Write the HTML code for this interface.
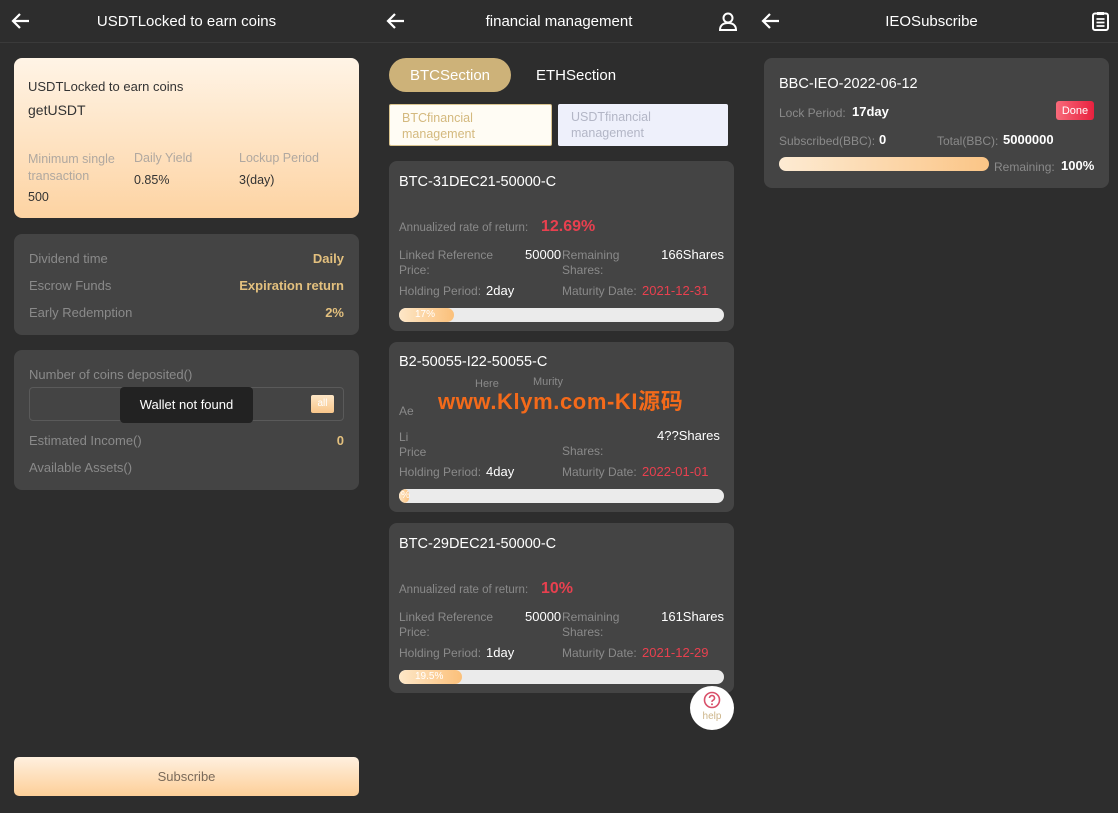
<!DOCTYPE html>
<html><head><meta charset="utf-8"><style>
*{margin:0;padding:0;box-sizing:border-box}
body{width:1118px;height:813px;background:#2d2d2d;font-family:"Liberation Sans","Noto Sans CJK SC",sans-serif;position:relative;overflow:hidden;color:#fff}
.a{position:absolute}
.hdr{position:absolute;top:0;height:43px;border-bottom:1px solid #3a3a3a;font-size:15px;color:#fff;text-align:center;line-height:44px}
.arrow{position:absolute;top:12px}
.card{position:absolute;background:#444;border-radius:8px}
.lab{color:#8a8a8a;font-size:12px}
.gold{color:#e3c07e;font-weight:bold;font-size:13px}
.red{color:#e8404f}
.bar{position:absolute;height:14px;background:#ebebeb;border-radius:7px;overflow:hidden}
.bar i{display:block;height:14px;background:linear-gradient(90deg,#fde7c8,#fbc07a);border-radius:7px;color:#fff;font-size:10px;font-style:normal;line-height:14px;padding-left:8px}
</style></head><body>
<div class="hdr" style="left:0;width:373px">USDTLocked to earn coins</div>
<div class="hdr" style="left:373px;width:372px">financial management</div>
<div class="hdr" style="left:745px;width:373px">IEOSubscribe</div>
<svg class="arrow" style="left:11px" width="20" height="18" viewBox="0 0 20 18"><path d="M18 9H3M9 2L2 9l7 7" stroke="#fff" stroke-width="2.2" fill="none"/></svg>
<svg class="arrow" style="left:386px" width="20" height="18" viewBox="0 0 20 18"><path d="M18 9H3M9 2L2 9l7 7" stroke="#fff" stroke-width="2.2" fill="none"/></svg>
<svg class="arrow" style="left:761px" width="20" height="18" viewBox="0 0 20 18"><path d="M18 9H3M9 2L2 9l7 7" stroke="#fff" stroke-width="2.2" fill="none"/></svg>
<svg class="a" style="left:718px;top:12px" width="20" height="19" viewBox="0 0 20 19"><circle cx="10" cy="6" r="4.5" stroke="#fff" stroke-width="2" fill="none"/><path d="M2 18c0-5 3.5-7 8-7s8 2 8 7z" stroke="#fff" stroke-width="2" fill="none"/></svg>
<svg class="a" style="left:1092px;top:11px" width="17" height="20" viewBox="0 0 17 20"><rect x="1" y="2.5" width="15" height="16.5" rx="2" stroke="#fff" stroke-width="2" fill="none"/><rect x="5" y="1" width="7" height="3" fill="#fff"/><path d="M4.5 8h8M4.5 11.5h8M4.5 15h8" stroke="#fff" stroke-width="1.8"/></svg>

<div class="a" style="left:14px;top:58px;width:345px;height:160px;border-radius:8px;background:linear-gradient(180deg,#fff4e6,#fdd3a2)"></div>
<div class="a" style="left:28px;top:79px;font-size:13px;color:#333">USDTLocked to earn coins</div>
<div class="a" style="left:28px;top:102px;font-size:14px;color:#333">getUSDT</div>
<div class="a" style="left:28px;top:151px;font-size:12.5px;color:#b0a8a0;line-height:17px">Minimum single<br>transaction</div>
<div class="a" style="left:28px;top:190px;font-size:12.5px;color:#333">500</div>
<div class="a" style="left:134px;top:151px;font-size:12.5px;color:#b0a8a0">Daily Yield</div>
<div class="a" style="left:134px;top:173px;font-size:12.5px;color:#333">0.85%</div>
<div class="a" style="left:239px;top:151px;font-size:12.5px;color:#b0a8a0">Lockup Period</div>
<div class="a" style="left:239px;top:173px;font-size:12.5px;color:#333">3(day)</div>

<div class="card" style="left:14px;top:234px;width:345px;height:101px"></div>
<div class="a lab" style="left:29px;top:251px;font-size:13px">Dividend time</div>
<div class="a gold" style="right:774px;top:251px">Daily</div>
<div class="a lab" style="left:29px;top:278px;font-size:13px">Escrow Funds</div>
<div class="a gold" style="right:774px;top:278px">Expiration return</div>
<div class="a lab" style="left:29px;top:305px;font-size:13px">Early Redemption</div>
<div class="a gold" style="right:774px;top:305px">2%</div>

<div class="card" style="left:14px;top:350px;width:345px;height:140px"></div>
<div class="a lab" style="left:29px;top:367px;font-size:13px">Number of coins deposited()</div>
<div class="a" style="left:29px;top:387px;width:315px;height:34px;border:1px solid #5a5a5a;border-radius:4px"></div>
<div class="a" style="left:311px;top:395px;width:23px;height:18px;background:linear-gradient(#fde6c6,#f9c68a);border-radius:2px;font-size:10px;color:#fff;text-align:center;line-height:18px">all</div>
<div class="a" style="left:120px;top:387px;width:133px;height:36px;background:#222;border-radius:4px;font-size:13px;line-height:36px;text-align:center;color:#fff">Wallet not found</div>
<div class="a lab" style="left:29px;top:433px;font-size:13px">Estimated Income()</div>
<div class="a gold" style="right:774px;top:433px">0</div>
<div class="a lab" style="left:29px;top:460px;font-size:13px">Available Assets()</div>

<div class="a" style="left:14px;top:757px;width:345px;height:39px;border-radius:5px;background:linear-gradient(180deg,#fff0df,#fdcf98);font-size:13px;color:#7a6a5a;text-align:center;line-height:40px">Subscribe</div>

<div class="a" style="left:389px;top:58px;width:122px;height:34px;border-radius:17px;background:#cdb279;font-size:15px;color:#fff;text-align:center;line-height:36px">BTCSection</div>
<div class="a" style="left:536px;top:67px;font-size:15px;color:#fff">ETHSection</div>
<div class="a" style="left:389px;top:104px;width:163px;height:42px;background:#fffcf4;border:1px solid #d9c48f;border-radius:2px;font-size:12.5px;color:#d4b97e;padding:5px 12px;line-height:16px">BTCfinancial<br>management</div>
<div class="a" style="left:558px;top:104px;width:170px;height:42px;background:#eef0fb;border-radius:2px;font-size:12.5px;color:#b3b6c6;padding:5px 13px;line-height:16px">USDTfinancial<br>management</div>

<div class="card" style="left:389px;top:161px;width:345px;height:170px"></div>
<div class="a" style="left:399px;top:174px;font-size:14.5px">BTC-31DEC21-50000-C</div>
<div class="a lab" style="left:399px;top:222px;font-size:11.5px">Annualized rate of return:</div>
<div class="a red" style="left:541px;top:218px;font-size:16px;font-weight:bold">12.69%</div>
<div class="a lab" style="left:399px;top:248px;line-height:15px">Linked Reference<br>Price:</div>
<div class="a" style="left:525px;top:247px;font-size:13px">50000</div>
<div class="a lab" style="left:562px;top:248px;line-height:15px">Remaining<br>Shares:</div>
<div class="a" style="right:394px;top:247px;font-size:13px">166Shares</div>
<div class="a lab" style="left:399px;top:284px">Holding Period:</div>
<div class="a" style="left:486px;top:283px;font-size:13px">2day</div>
<div class="a lab" style="left:562px;top:284px">Maturity Date:</div>
<div class="a red" style="left:642px;top:283px;font-size:13px">2021-12-31</div>
<div class="bar" style="left:399px;top:308px;width:325px"><i style="width:55px;padding-left:16px">17%</i></div>

<div class="card" style="left:389px;top:342px;width:345px;height:170px"></div>
<div class="a" style="left:399px;top:354px;font-size:14.5px">B2-50055-I22-50055-C</div>
<div class="a lab" style="left:475px;top:378px;font-size:11px">Here</div>
<div class="a lab" style="left:533px;top:376px;font-size:11px">Murity</div>
<div class="a lab" style="left:399px;top:404px">Ae</div>
<div class="a" style="left:438px;top:384px;font-size:22px;font-weight:bold;color:#f46a1a;letter-spacing:0.6px">www.Klym.com-KI源码</div>
<div class="a lab" style="left:399px;top:430px;line-height:15px">Li<br>Price</div>
<div class="a" style="left:657px;top:428px;font-size:13px">4??Shares</div>
<div class="a lab" style="left:562px;top:444px">Shares:</div>
<div class="a lab" style="left:399px;top:465px">Holding Period:</div>
<div class="a" style="left:486px;top:464px;font-size:13px">4day</div>
<div class="a lab" style="left:562px;top:465px">Maturity Date:</div>
<div class="a red" style="left:642px;top:464px;font-size:13px">2022-01-01</div>
<div class="bar" style="left:399px;top:489px;width:325px"><i style="width:10px;padding-left:2px">%</i></div>

<div class="card" style="left:389px;top:523px;width:345px;height:170px"></div>
<div class="a" style="left:399px;top:536px;font-size:14.5px">BTC-29DEC21-50000-C</div>
<div class="a lab" style="left:399px;top:584px;font-size:11.5px">Annualized rate of return:</div>
<div class="a red" style="left:541px;top:580px;font-size:16px;font-weight:bold">10%</div>
<div class="a lab" style="left:399px;top:610px;line-height:15px">Linked Reference<br>Price:</div>
<div class="a" style="left:525px;top:609px;font-size:13px">50000</div>
<div class="a lab" style="left:562px;top:610px;line-height:15px">Remaining<br>Shares:</div>
<div class="a" style="right:394px;top:609px;font-size:13px">161Shares</div>
<div class="a lab" style="left:399px;top:646px">Holding Period:</div>
<div class="a" style="left:486px;top:645px;font-size:13px">1day</div>
<div class="a lab" style="left:562px;top:646px">Maturity Date:</div>
<div class="a red" style="left:642px;top:645px;font-size:13px">2021-12-29</div>
<div class="bar" style="left:399px;top:670px;width:325px"><i style="width:63px;padding-left:16px">19.5%</i></div>

<div class="a" style="left:690px;top:686px;width:44px;height:44px;border-radius:50%;background:#fff"></div>
<svg class="a" style="left:703px;top:691px" width="18" height="18" viewBox="0 0 18 18"><circle cx="9" cy="9" r="7.5" stroke="#d9506a" stroke-width="1.6" fill="none"/><path d="M6.5 7a2.5 2.5 0 1 1 3.5 2.3c-.7.3-1 .8-1 1.6" stroke="#d9506a" stroke-width="1.6" fill="none"/><circle cx="9" cy="13.3" r="1" fill="#d9506a"/></svg>
<div class="a" style="left:690px;top:711px;width:44px;text-align:center;font-size:10px;color:#cdb58a">help</div>

<div class="card" style="left:764px;top:58px;width:345px;height:130px"></div>
<div class="a" style="left:779px;top:76px;font-size:14.5px">BBC-IEO-2022-06-12</div>
<div class="a lab" style="left:779px;top:106px">Lock Period:</div>
<div class="a" style="left:852px;top:104px;font-size:13px;font-weight:bold">17day</div>
<div class="a" style="left:1056px;top:101px;width:38px;height:19px;border-radius:3px;background:linear-gradient(90deg,#f86a7a,#e8213f);font-size:11px;text-align:center;line-height:20px">Done</div>
<div class="a lab" style="left:779px;top:134px">Subscribed(BBC):</div>
<div class="a" style="left:879px;top:132px;font-size:13px;font-weight:bold">0</div>
<div class="a lab" style="left:937px;top:134px">Total(BBC):</div>
<div class="a" style="left:1003px;top:132px;font-size:13px;font-weight:bold">5000000</div>
<div class="a" style="left:779px;top:157px;width:210px;height:14px;border-radius:7px;background:linear-gradient(90deg,#fdebd3,#fbc586)"></div>
<div class="a lab" style="left:994px;top:160px">Remaining:</div>
<div class="a" style="left:1061px;top:158px;font-size:13px;font-weight:bold">100%</div>
</body></html>
